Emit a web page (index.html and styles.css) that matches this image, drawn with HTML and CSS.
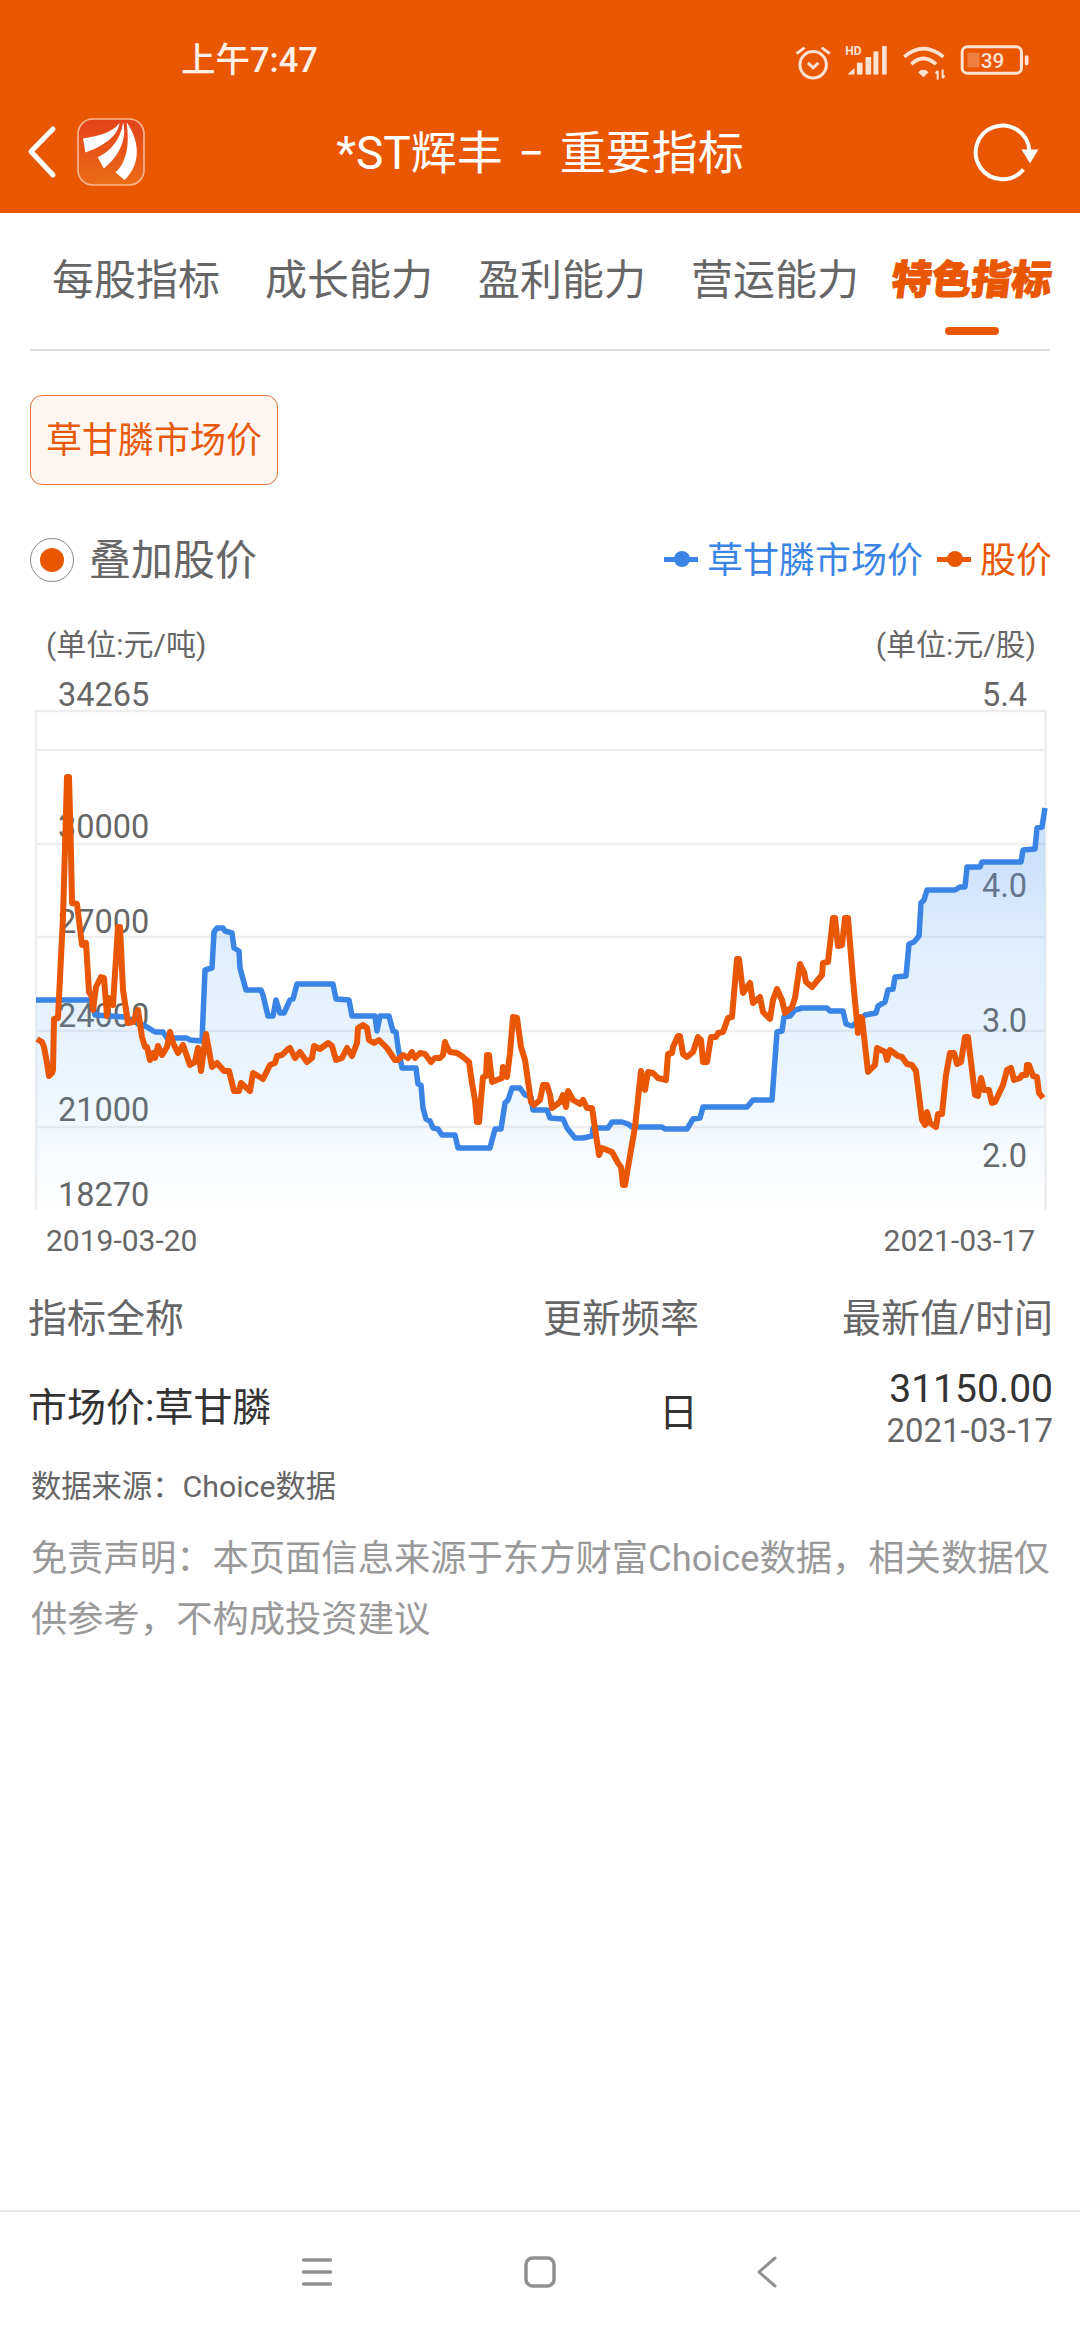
FILE: index.html
```html
<!DOCTYPE html>
<html lang="zh-CN">
<head>
<meta charset="utf-8">
<title>*ST辉丰 - 重要指标</title>
<link rel="stylesheet" href="styles.css">
</head>
<body>
<div class="page">
  <header class="top">
    <div class="status">
      <span class="clock">上午7:47</span>
      <div class="status-icons">
        <svg class="ic-alarm" viewBox="40 60 115 110"><circle cx="98" cy="122" r="40"/><path d="M82 116L98 131L114 116"/><path d="M48 88L72 70M148 88L124 70"/></svg>
        <svg class="ic-signal" viewBox="186 66 130 96"><text class="hd" x="187" y="100">HD</text><path class="solid" d="M193 158L215 158L215 138Z"/><rect class="solid" x="222" y="122" width="17" height="36"/><rect class="solid" x="248" y="105" width="17" height="53"/><rect class="solid" x="272" y="88" width="15" height="70"/><rect class="solid" x="298" y="72" width="14" height="86"/></svg>
        <svg class="ic-wifi" viewBox="355 66 135 110"><path d="M365 104Q422 55 482 104"/><path d="M386 126Q422 92 460 126"/><path class="solid" d="M406 150Q422 136 438 150L422 165Z"/><path class="thin" d="M465 172V146M459 154L465 146M480 142V168M480 168L486 160"/></svg>
        <svg class="ic-battery" viewBox="530 68 212 96"><rect x="539" y="76" width="178" height="80" rx="16"/><rect class="level" x="555" y="94" width="36" height="44"/><text class="pct" x="630" y="141" text-anchor="middle">39</text><rect class="solid" x="727" y="102" width="11" height="30" rx="5"/></svg>
      </div>
    </div>
    <div class="titlebar">
      <div class="title-left">
        <svg class="ic-back" viewBox="0 0 30 54"><path d="M26 4L4 26.500L26 50"/></svg>
        <svg class="logo" viewBox="230 295 203 203">
          <defs><linearGradient id="logoBg" x1="0" y1="0" x2="0" y2="1"><stop offset="0" stop-color="#e4421a"/><stop offset="1" stop-color="#ec6c16"/></linearGradient></defs>
          <rect x="233" y="298" width="197" height="197" rx="44" fill="url(#logoBg)" stroke="#f7b48f" stroke-width="5"/>
          <path fill="#fff" d="M248 356C290 350 335 340 357 310C352 345 320 375 255 398Z"/>
          <path fill="#fff" d="M292 412C330 395 360 360 368 308C380 360 355 410 310 446Z"/>
          <path fill="#fff" d="M345 458C385 420 385 360 378 308C415 360 425 430 372 480Z"/>
        </svg>
      </div>
      <h1 class="title">*ST辉丰 − 重要指标</h1>
      <div class="title-right">
        <svg class="ic-refresh" viewBox="570 305 205 185"><path d="M722 450A81 81 0 1 1 740 392"/><path class="head" d="M716 390H767L742 432Z"/></svg>
      </div>
    </div>
  </header>

  <nav class="tabs">
    <div class="tab">每股指标</div>
    <div class="tab">成长能力</div>
    <div class="tab">盈利能力</div>
    <div class="tab">营运能力</div>
    <div class="tab tab-on"><span class="tab-text">特色指标</span><i class="tab-bar"></i></div>
  </nav>

  <div class="chip">草甘膦市场价</div>

  <div class="overlay-row">
    <div class="radio-wrap"><span class="radio"><i></i></span><span class="radio-label">叠加股价</span></div>
    <div class="legend">
      <span class="mark mark-blue"></span><span class="leg-text leg-blue">草甘膦市场价</span>
      <span class="mark mark-orange"></span><span class="leg-text leg-orange">股价</span>
    </div>
  </div>

  <div class="units"><span>(单位:元/吨)</span><span>(单位:元/股)</span></div>

  <svg class="chart" viewBox="0 665 1080 547">
    <defs>
      <linearGradient id="areaFill" gradientUnits="userSpaceOnUse" x1="0" y1="808" x2="0" y2="1210">
        <stop offset="0" stop-color="#5c9cf0" stop-opacity=".33"/>
        <stop offset=".154" stop-color="#5c9ef2" stop-opacity=".3"/>
        <stop offset=".3" stop-color="#5aa8fa" stop-opacity=".21"/>
        <stop offset=".478" stop-color="#5aa8fa" stop-opacity=".16"/>
        <stop offset=".726" stop-color="#5aa8fa" stop-opacity=".1"/>
        <stop offset=".925" stop-color="#5aa8fa" stop-opacity=".03"/>
        <stop offset="1" stop-color="#5aa8fa" stop-opacity="0"/>
      </linearGradient>
    </defs>
    <path class="grid" d="M36 711H1046M36 750H1046M36 844H1046M36 937H1046M36 1031H1046M36 1127H1046M36 710V1210M1045.500 710V1210"/>
    <text class="tick" x="58" y="706">34265</text>
    <text class="tick" x="58" y="838">30000</text>
    <text class="tick" x="58" y="933">27000</text>
    <text class="tick" x="58" y="1027">24000</text>
    <text class="tick" x="58" y="1121">21000</text>
    <text class="tick" x="58" y="1206">18270</text>
    <text class="tick end" x="1027" y="706">5.4</text>
    <text class="tick end" x="1027" y="897">4.0</text>
    <text class="tick end" x="1027" y="1032">3.0</text>
    <text class="tick end" x="1027" y="1167">2.0</text>
    <polygon class="area" points="36,1210 36,1000 92,1000 95,1015 125,1017 137,1022 147,1027 155,1032 163,1032 167,1038 187,1038 190,1040 202,1041 205,970 212,968 214,932 217,928 223,928 225,931 232,933 234,948 239,951 240,968 246,990 261,990 263,995 268,1016 273,1016 276,1000 280,1013 284,1013 290,1000 293,999 297,984 333,984 336,999 349,1000 352,1016 375,1016 377,1031 380,1016 389,1016 393,1031 396,1032 398,1047 402,1068 416,1068 418,1084 421,1085 423,1108 426,1119 430,1121 433,1128 438,1129 442,1135 455,1135 458,1148 490,1148 495,1129 501,1129 505,1103 508,1100 512,1088 520,1088 525,1095 531,1097 533,1110 547,1110 550,1118 563,1119 567,1128 575,1138 583,1138 592,1136 593,1128 608,1128 612,1122 622,1122 628,1124 632,1127 662,1127 665,1129 687,1129 693,1119 700,1118 703,1107 747,1107 753,1100 772,1100 777,1032 782,1031 784,1017 790,1016 795,1010 802,1008 827,1008 830,1011 843,1011 846,1024 852,1026 865,1015 876,1013 878,1006 885,1002 888,990 893,989 895,977 906,976 909,944 914,942 919,936 921,903 924,900 927,890 955,890 960,887 965,887 967,867 980,867 982,862 1021,862 1023,850 1035,849 1037,828 1042,827 1045,808 1045,1210"/>
    <polyline class="line-blue" points="36,1000 92,1000 95,1015 125,1017 137,1022 147,1027 155,1032 163,1032 167,1038 187,1038 190,1040 202,1041 205,970 212,968 214,932 217,928 223,928 225,931 232,933 234,948 239,951 240,968 246,990 261,990 263,995 268,1016 273,1016 276,1000 280,1013 284,1013 290,1000 293,999 297,984 333,984 336,999 349,1000 352,1016 375,1016 377,1031 380,1016 389,1016 393,1031 396,1032 398,1047 402,1068 416,1068 418,1084 421,1085 423,1108 426,1119 430,1121 433,1128 438,1129 442,1135 455,1135 458,1148 490,1148 495,1129 501,1129 505,1103 508,1100 512,1088 520,1088 525,1095 531,1097 533,1110 547,1110 550,1118 563,1119 567,1128 575,1138 583,1138 592,1136 593,1128 608,1128 612,1122 622,1122 628,1124 632,1127 662,1127 665,1129 687,1129 693,1119 700,1118 703,1107 747,1107 753,1100 772,1100 777,1032 782,1031 784,1017 790,1016 795,1010 802,1008 827,1008 830,1011 843,1011 846,1024 852,1026 865,1015 876,1013 878,1006 885,1002 888,990 893,989 895,977 906,976 909,944 914,942 919,936 921,903 924,900 927,890 955,890 960,887 965,887 967,867 980,867 982,862 1021,862 1023,850 1035,849 1037,828 1042,827 1045,808"/>
    <polyline class="line-orange" points="37,1039 42,1042 44,1047 47,1063 49,1076 52,1073 53,1070 54,1019 58,1018 63,917 67,777 69,777 71,853 72,903 77,904 82,945 86,943 89,992 92,997 93,1010 96,987 101,977 104,978 107,1016 109,998 113,1005 118,927 120,927 123,990 128,1023 133,1022 138,1010 142,1037 145,1047 147,1047 150,1060 153,1053 155,1058 158,1046 162,1055 167,1047 170,1032 173,1043 178,1053 183,1045 190,1065 195,1062 198,1048 201,1071 206,1034 212,1067 217,1063 224,1071 229,1071 234,1091 239,1091 241,1083 250,1091 253,1073 263,1079 270,1065 275,1063 277,1056 282,1055 288,1049 290,1048 295,1058 300,1052 307,1062 312,1058 314,1046 320,1049 328,1043 332,1046 336,1060 342,1058 347,1048 352,1056 357,1043 358,1028 363,1025 367,1028 369,1040 374,1043 379,1040 387,1048 395,1060 398,1060 403,1055 408,1058 412,1052 415,1058 420,1053 425,1054 431,1062 435,1058 440,1058 443,1055 445,1042 447,1047 450,1052 457,1053 463,1057 469,1062 472,1083 475,1100 477,1122 479,1122 483,1077 486,1076 487,1055 489,1055 492,1082 502,1078 503,1067 507,1077 510,1053 513,1017 517,1018 521,1047 525,1060 531,1102 534,1105 540,1100 543,1085 547,1085 550,1095 552,1108 560,1102 563,1095 566,1107 568,1091 573,1100 580,1104 583,1100 587,1108 592,1108 599,1155 602,1148 612,1152 618,1163 621,1167 623,1185 625,1185 627,1173 635,1127 641,1071 645,1090 648,1072 653,1073 658,1078 666,1080 668,1054 672,1053 673,1047 678,1036 680,1036 683,1054 687,1057 693,1052 698,1037 701,1040 703,1062 707,1062 711,1037 716,1037 718,1033 723,1032 728,1018 732,1017 737,959 739,959 743,993 750,983 753,1003 760,997 763,1012 770,1019 773,1000 777,989 782,1000 785,1013 792,1007 795,998 800,964 804,972 806,982 812,987 822,975 823,963 828,962 833,918 835,918 838,946 842,945 845,918 848,918 853,980 858,1033 860,1017 862,1018 868,1072 875,1065 877,1048 885,1052 887,1060 890,1050 898,1056 902,1057 907,1064 912,1065 916,1071 922,1120 925,1125 927,1112 930,1123 936,1127 938,1114 942,1114 946,1075 950,1053 954,1053 957,1064 961,1062 965,1037 968,1037 975,1095 978,1096 981,1078 984,1090 989,1090 992,1103 995,1102 1003,1085 1007,1070 1011,1068 1014,1080 1020,1078 1022,1075 1026,1075 1027,1065 1029,1065 1033,1076 1037,1077 1039,1093 1043,1098"/>
  </svg>

  <div class="dates"><span>2019-03-20</span><span>2021-03-17</span></div>

  <div class="row row-head">
    <div>指标全称</div>
    <div class="col-mid">更新频率</div>
    <div class="col-end">最新值/时间</div>
  </div>
  <div class="row row-data">
    <div class="cell-name">市场价:草甘膦</div>
    <div class="col-mid cell-freq">日</div>
    <div class="col-end">
      <div class="cell-value">31150.00</div>
      <div class="cell-date">2021-03-17</div>
    </div>
  </div>

  <p class="source">数据来源：Choice数据</p>
  <p class="note">免责声明：本页面信息来源于东方财富Choice数据，相关数据仅<br>供参考，不构成投资建议</p>

  <footer class="sysnav">
    <svg class="nav-menu" viewBox="0 0 30 28"><path d="M1.500 2H28.500M1.500 14H28.500M1.500 26H28.500"/></svg>
    <svg class="nav-home" viewBox="0 0 32 32"><rect x="2" y="2" width="28" height="28" rx="6.500"/></svg>
    <svg class="nav-back" viewBox="0 0 20 32"><path d="M18 2L2 16L18 30"/></svg>
  </footer>
</div>
</body>
</html>
```
FILE: styles.css
```css
* { box-sizing: border-box; }
html, body { margin: 0; padding: 0; background: #fff; }
body { font-family: "Roboto", "Noto Sans CJK SC", sans-serif; }
.page { width: 1080px; height: 2340px; display: flex; flex-direction: column; background: #fff; overflow: hidden; }
i { display: block; font-style: normal; }
p, h1 { margin: 0; font-weight: 400; }

/* orange app header */
.top { height: 213px; background: #ea5703; color: #fff; flex: none; }
.status { height: 90px; padding: 30px 50px 0 181px; display: flex; justify-content: space-between; }
.clock { font-size: 34.500px; line-height: 60px; font-weight: 500; color: #fff1e8; }
.status-icons { display: flex; gap: 13px; align-items: flex-start; padding-top: 13px; }
.status-icons svg { display: block; fill: none; stroke: #fde2d3; stroke-width: 9; }
.status-icons .solid { fill: #fde2d3; stroke: none; }
.ic-alarm { width: 38px; height: 37px; margin-top: 1px; }
.ic-signal { width: 43px; height: 32px; margin-top: 1px; }
.ic-wifi { width: 45px; height: 37px; margin-top: 1px; stroke-width: 11 !important; }
.ic-wifi .thin { stroke-width: 6; }
.ic-battery { width: 71px; height: 32px; margin-top: 1px; }
.status-icons .hd { font-size: 36px; font-weight: 700; fill: #fde2d3; stroke: none; font-family: "Roboto", sans-serif; }
.status-icons .pct { font-size: 62px; font-weight: 500; fill: #fde2d3; stroke: none; font-family: "Roboto", sans-serif; }
.status-icons .level { fill: #fde2d3; fill-opacity: .3; stroke: none; }

.titlebar { height: 123px; display: grid; grid-template-columns: 1fr auto 1fr; align-items: center; }
.title-left { display: flex; align-items: center; padding-left: 27px; gap: 20px; }
.ic-back { width: 30px; height: 54px; fill: none; stroke: #fff; stroke-width: 5; stroke-linecap: round; stroke-linejoin: round; }
.logo { width: 68px; height: 68px; display: block; }
.title { font-size: 46px; word-spacing: 4px; line-height: 60px; padding-top: 2px; color: #fff; white-space: nowrap; }
.title-right { display: flex; justify-content: flex-end; padding-right: 39px; }
.ic-refresh { width: 68px; height: 62px; fill: none; stroke: #fff; stroke-width: 12; display: block; }
.ic-refresh .head { fill: #fff; stroke: none; }

/* section tabs */
.tabs { display: flex; align-items: flex-start; margin: 0 30px; padding: 34px 0 14px 22px; border-bottom: 2px solid #dedede; height: 138px; flex: none; font-family: "Noto Sans CJK SC", sans-serif; }
.tab { font-size: 42px; line-height: 60px; color: #666; margin-right: 45px; white-space: nowrap; }
.tab-on { margin-left: -12px; margin-right: 0; display: flex; flex-direction: column; align-items: center; }
.tab-text { display: block; font-size: 40px; font-weight: 900; color: #ea5703; transform: skewX(-7deg); -webkit-text-stroke: 1.200px #ea5703; }
.tab-bar { width: 54px; height: 8px; border-radius: 4px; background: #ea5703; margin-top: 20px; }

/* indicator chip */
.chip { width: 248px; height: 90px; margin: 44px 0 0 30px; border: 1.500px solid #e2713a; border-radius: 12px; background: #fff6f2; color: #e85a0a; font-size: 36px; line-height: 82px; text-align: center; flex: none; font-family: "Noto Sans CJK SC", sans-serif; }

/* overlay toggle and legend */
.overlay-row { height: 43px; margin: 53px 28px 0 30px; display: flex; justify-content: space-between; align-items: center; flex: none; font-family: "Noto Sans CJK SC", sans-serif; }
.radio-wrap { display: flex; align-items: center; gap: 15px; }
.radio { width: 44px; height: 44px; border: 1.500px solid #8a8a8a; border-radius: 50%; display: flex; align-items: center; justify-content: center; }
.radio i { width: 24px; height: 24px; border-radius: 50%; background: #ea5703; }
.radio-label { font-size: 42px; line-height: 44px; padding-bottom: 6px; color: #666; }
.legend { display: flex; align-items: center; font-size: 36px; line-height: 44px; }
.leg-text { padding-bottom: 6px; }
.mark { width: 34px; height: 5px; position: relative; margin-right: 9px; }
.mark::after { content: ""; position: absolute; left: 10px; top: -6px; width: 16px; height: 16px; border-radius: 50%; background: inherit; }
.mark-blue { background: #3a84e6; }
.mark-orange { background: #ea5703; margin-left: 14px; }
.leg-blue { color: #3a84e6; }
.leg-orange { color: #ea5703; }

.units { height: 40px; margin: 44px 0 0; padding: 0 44px 0 46px; display: flex; justify-content: space-between; font-size: 30px; line-height: 40px; color: #666; flex: none; font-family: "Roboto", "Noto Sans CJK SC", sans-serif; }

/* dual axis line chart */
.chart { display: block; width: 1080px; height: 547px; flex: none; overflow: visible; }
.grid { stroke: #eeeeee; stroke-width: 2.500; fill: none; }
.tick { font-family: "Roboto", sans-serif; font-size: 32.500px; fill: #666; }
.tick.end { text-anchor: end; }
.area { fill: url(#areaFill); stroke: none; }
.line-blue, .line-orange { fill: none; stroke-linejoin: round; }
.line-blue { stroke: #3a84e6; stroke-width: 5.500; }
.line-orange { stroke: #e95604; stroke-width: 6; }

.dates { height: 40px; margin-top: 9px; padding: 0 45px 0 46px; display: flex; justify-content: space-between; font-size: 30px; line-height: 40px; color: #666; flex: none; }

/* indicator table */
.row { display: grid; grid-template-columns: 1fr 170px 354px; padding: 0 27px 0 28px; flex: none; font-family: "Roboto", "Noto Sans CJK SC", sans-serif; }
.row-head { height: 50px; margin-top: 33px; font-size: 39px; line-height: 50px; color: #666; }
.row-data { height: 84px; margin-top: 22px; align-items: center; font-size: 39px; color: #333; }
.col-mid { text-align: right; }
.col-end { text-align: right; white-space: nowrap; }
.cell-name { margin-bottom: 8px; }
.cell-freq { margin-top: 2px; padding-right: 1px; }
.cell-value { font-size: 39px; line-height: 46px; }
.cell-date { font-size: 33px; line-height: 38px; color: #666; }

.source { margin: 17px 0 0 31px; font-size: 30.300px; line-height: 40px; color: #666; flex: none; font-family: "Roboto", "Noto Sans CJK SC", sans-serif; }
.note { margin: 21px 0 0 31px; width: 1040px; font-size: 36.300px; line-height: 61px; color: #999; flex: none; font-family: "Roboto", "Noto Sans CJK SC", sans-serif; }

/* system navigation bar */
.sysnav { margin-top: auto; height: 130px; border-top: 2px solid #e8e8e8; flex: none; display: flex; align-items: center; padding: 0 0 8px 302px; }
.sysnav svg { display: block; fill: none; stroke: #909090; stroke-linecap: round; stroke-linejoin: round; }
.nav-menu { width: 30px; height: 28px; stroke-width: 3.500; }
.nav-home { width: 32px; height: 32px; margin-left: 192px; stroke-width: 3.500; }
.nav-back { width: 20px; height: 32px; margin-left: 201px; stroke-width: 3; }
```
